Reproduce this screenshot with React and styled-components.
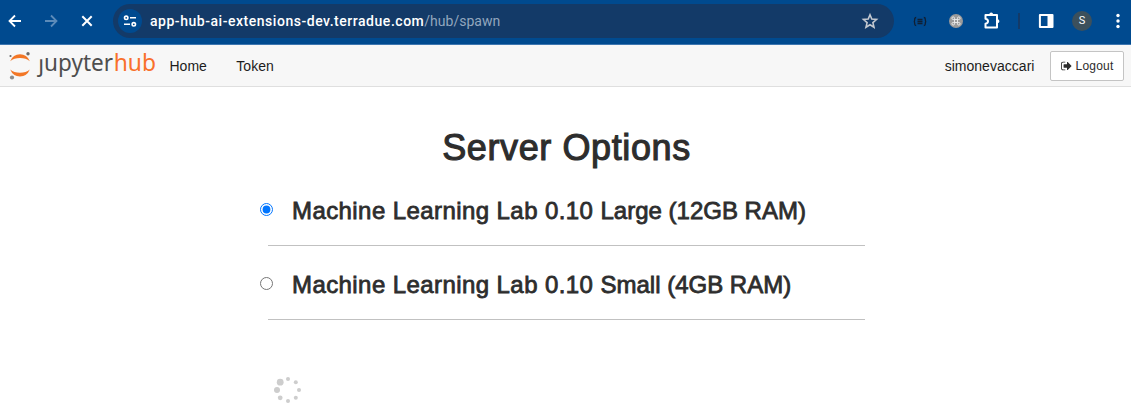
import React from "react";
import styled, { createGlobalStyle } from "styled-components";

const Global = createGlobalStyle`
  * { box-sizing: border-box; }
  body { margin: 0; background: #fff; color: #2d2d2d; font-family: "Liberation Sans", Arial, sans-serif; overflow: hidden; }
`;
const Toolbar = styled.div`
  height: 45px;
  padding: 0 3px 3px 5px;
  background: #004a8f;
  border-bottom: 1px solid #3d76b0;
  display: flex;
  align-items: center;
  & > * { flex-shrink: 0; }
`;
const ToolIcon = styled.svg`
  display: block;
  flex: none;
  width: 20px;
  height: 20px;
  margin-right: ${(p) => p.$gap || 0}px;
  fill: none;
  stroke: ${(p) => p.$color || "#fff"};
  stroke-width: 2;
`;
const AddressBar = styled.div`
  width: 781px;
  height: 34px;
  border-radius: 17px;
  background: #133a68;
  display: flex;
  align-items: center;
  padding: 0 14px 0 5px;
  margin-right: 16px;
`;
const SiteInfo = styled.div`
  width: 24px;
  height: 24px;
  border-radius: 50%;
  background: #004a8f;
  display: grid;
  place-items: center;
  margin-right: 8px;
`;
const Url = styled.div`
  flex: 1;
  font: 500 14px/20px Roboto, sans-serif;
  letter-spacing: 0.53px;
  color: #fff;
  white-space: nowrap;
`;
const Path = styled.span`
  color: #92a6be;
  font-weight: 400;
  letter-spacing: 0;
`;
const Divider = styled.div`
  width: 2px;
  height: 16px;
  background: #133a68;
  margin-right: 16px;
`;
const Avatar = styled.div`
  width: 20px;
  height: 20px;
  border-radius: 50%;
  background: #3c505c;
  color: #fff;
  font: 11px/20px Roboto, sans-serif;
  text-align: center;
  margin-right: 16px;
`;
const Navbar = styled.nav`
  height: 42px;
  background: #f7f7f7;
  border-bottom: 1px solid #dfdfdf;
  display: flex;
  align-items: center;
  padding: 0 7px 0 8px;
`;
const Logo = styled.svg`
  display: block;
  flex: none;
  width: 150px;
  height: 41px;
  margin-right: 11.5px;
`;
const NavLink = styled.a`
  font-size: 14px;
  line-height: 20px;
  letter-spacing: ${(p) => p.$spacing || 0}px;
  color: #1c1c1c;
  margin-right: ${(p) => p.$gap || 0}px;
`;
const Spacer = styled.div`
  flex: 1;
`;
const LogoutButton = styled.button`
  width: 74px;
  height: 30px;
  padding: 0;
  border: 1px solid #c4c4c4;
  border-radius: 2px;
  background: #fff;
  color: #2d2d2d;
  font: 12px/18px "Liberation Sans", Arial, sans-serif;
  letter-spacing: 0.2px;
  display: flex;
  align-items: center;
  justify-content: center;
  gap: 3px;
`;
const Main = styled.main`
  width: 597px;
  margin-left: 268px;
  padding-top: 41px;
`;
const Title = styled.h1`
  margin: 0;
  font-size: 36px;
  line-height: 40px;
  font-weight: 400;
  letter-spacing: 0.6px;
  -webkit-text-stroke: 1.1px #2d2d2d;
  text-align: center;
`;
const OptionList = styled.div`
  margin-top: 4px;
`;
const Option = styled.label`
  display: flex;
  align-items: center;
  height: 74px;
  padding-top: 2px;
  border-bottom: 1px solid #c1c1c1;
`;
const Radio = styled.input`
  width: 13px;
  height: 13px;
  margin: 0 19px 0 -8px;
`;
const OptionName = styled.span`
  padding-top: 2px;
  font-size: 24px;
  line-height: 26px;
  letter-spacing: 0.42px;
  -webkit-text-stroke: 0.8px #2d2d2d;
  white-space: nowrap;
`;
const OptionSize = styled.span`
  letter-spacing: 0;
`;
const Spinner = styled.svg`
  display: block;
  width: 30px;
  height: 30px;
  margin: 55px 0 0 5px;
  fill: #cdcdcd;
`;

const options = [
  { lab: "Machine Learning Lab 0.10", size: "Large (12GB RAM)" },
  { lab: "Machine Learning Lab 0.10", size: "Small (4GB RAM)" },
];

export default function App() {
  return (
    <>
      <Global />
      <Toolbar>
        <ToolIcon viewBox="0 0 20 20" $gap={16}><path d="M16 10H5M10 4.5 4.5 10 10 15.5" strokeWidth="1.8" /></ToolIcon>
        <ToolIcon viewBox="0 0 20 20" $gap={16} $color="#5c8bb9"><path d="M4 10h11M10 4.5l5.5 5.5-5.5 5.5" strokeWidth="1.8" /></ToolIcon>
        <ToolIcon viewBox="0 0 20 20" $gap={16}><path d="M5.3 5.3l9.4 9.4M14.7 5.3l-9.4 9.4" /></ToolIcon>
        <AddressBar>
          <SiteInfo>
            <ToolIcon viewBox="0 0 20 20"><g strokeWidth="1.6"><circle cx="6.2" cy="6.8" r="1.7" /><path d="M10 6.8h6M4 13.3h6" /><circle cx="13.8" cy="13.3" r="1.7" /></g></ToolIcon>
          </SiteInfo>
          <Url>app-hub-ai-extensions-dev.terradue.com<Path>/hub/spawn</Path></Url>
          <ToolIcon viewBox="0 0 20 20" $color="#c3c8d0"><path d="M10 3.8l1.8 4.3 4.7.4-3.6 3.1 1.1 4.6-4-2.5-4 2.5 1.1-4.6-3.6-3.1 4.7-.4z" strokeWidth="1.6" /></ToolIcon>
        </AddressBar>
        <ToolIcon viewBox="0 0 20 20" $gap={16} $color="#101f33"><path d="M6.2 6.5q-1.5 0-1.5 1.5v1q0 1.5-1 1.5 1 0 1 1.5v1q0 1.5 1.5 1.5M13.8 6.5q1.5 0 1.5 1.5v1q0 1.5 1 1.5-1 0-1 1.5v1q0 1.5-1.5 1.5M7.5 8.5h5M7.5 10.5h5M7.5 12.5h5" strokeWidth="1.3" /></ToolIcon>
        <ToolIcon viewBox="0 0 20 20" $gap={16}>
          <circle cx="10" cy="10" r="7" fill="#9a9a9a" stroke="none" />
          <path d="M8.5 8.5v3h3v-3zM8.5 8.5H7.2a1.3 1.3 0 1 1 1.3-1.3zM11.5 8.5V7.2a1.3 1.3 0 1 1 1.3 1.3zM11.5 11.5h1.3a1.3 1.3 0 1 1-1.3 1.3zM8.5 11.5v1.3a1.3 1.3 0 1 1-1.3-1.3z" strokeWidth=".9" stroke="#eee" />
        </ToolIcon>
        <ToolIcon viewBox="0 0 20 20" $gap={16}>
          <path d="M3.5 3.9H15V16.5H3.5V12.7Q6 12.3 6 10.2T3.5 7.7Z" strokeLinejoin="round" />
          <path d="M7.3 3.5a1.9 1.9 0 0 1 3.8 0zM15.5 8.3a1.9 1.9 0 0 1 0 3.8z" fill="#fff" stroke="none" />
        </ToolIcon>
        <Divider />
        <ToolIcon viewBox="0 0 20 20" $gap={16}><path d="M3.9 3.9h12.6v12.2H3.9z" strokeLinejoin="round" /><path d="M11.5 4h5v12h-5z" fill="#fff" stroke="none" /></ToolIcon>
        <Avatar>S</Avatar>
        <ToolIcon viewBox="0 0 20 20"><g fill="#fff" stroke="none"><circle cx="10" cy="4.5" r="1.7" /><circle cx="10" cy="10" r="1.7" /><circle cx="10" cy="15.5" r="1.7" /></g></ToolIcon>
      </Toolbar>
      <Navbar>
        <Logo viewBox="8 45 150 41">
          <clipPath id="wordmark"><path d="M45 45H160V86H34V59.3H45Z" /></clipPath>
          <path d="M10.2 61.2Q13 54.3 20 54.3T29.8 61.2Q26 58 20 58T10.2 61.2ZM10.2 69.5Q14 72.7 20 72.7T29.8 69.5Q27 76.4 20 76.4T10.2 69.5Z" fill="#f37726" />
          <circle cx="28" cy="53.8" r="1.7" fill="#6b6b6b" />
          <circle cx="10.5" cy="56" r="1.1" fill="#6b6b6b" />
          <circle cx="12" cy="77.5" r="2.1" fill="#8c8c8c" />
          <g fontFamily="'Noto Sans', sans-serif" fontSize="23">
            <text x="38.3" y="71.3" textLength="74.7" lengthAdjust="spacingAndGlyphs" fill="#4e4e4e" clipPath="url(#wordmark)">jupyter</text>
            <text x="113.7" y="71.3" textLength="42.3" lengthAdjust="spacingAndGlyphs" fill="#f9702b">hub</text>
          </g>
        </Logo>
        <NavLink $gap={29.5}>Home</NavLink>
        <NavLink>Token</NavLink>
        <Spacer />
        <NavLink $gap={15.5} $spacing={0.03}>simonevaccari</NavLink>
        <LogoutButton>
          <svg width="12" height="12" viewBox="0 0 1792 1792" fill="#2d2d2d"><path d="M640 1440q0 4 1 20t.5 26.5-3 23.5-10 19.5-20.5 6.5h-320q-119 0-203.5-84.5t-84.5-203.5v-704q0-119 84.5-203.5t203.5-84.5h320q13 0 22.5 9.5t9.5 22.5q0 4 1 20t.5 26.5-3 23.5-10 19.5-20.5 6.5h-320q-66 0-113 47t-47 113v704q0 66 47 113t113 47h312l11.5 1 11.5 3 8 5.5 7 9 2 13.5zm928-544q0 26-19 45l-544 544q-19 19-45 19t-45-19-19-45v-288h-448q-26 0-45-19t-19-45v-384q0-26 19-45t45-19h448v-288q0-26 19-45t45-19 45 19l544 544q19 19 19 45z" /></svg>
          Logout
        </LogoutButton>
      </Navbar>
      <Main>
        <Title>Server Options</Title>
        <OptionList>
          {options.map(({ lab, size }, i) => (
            <Option key={size}>
              <Radio type="radio" name="profile" defaultChecked={i === 0} />
              <OptionName>{lab} <OptionSize>{size}</OptionSize></OptionName>
            </Option>
          ))}
        </OptionList>
        <Spinner viewBox="0 0 30 30">
          <circle cx="15" cy="4" r="2" />
          <circle cx="22.8" cy="7.2" r="2" />
          <circle cx="26" cy="15" r="2" />
          <circle cx="22.8" cy="22.8" r="2" />
          <circle cx="15" cy="26" r="2" />
          <circle cx="7.2" cy="22.8" r="2.4" />
          <circle cx="4" cy="15" r="3" />
          <circle cx="7.2" cy="7.2" r="3.4" />
        </Spinner>
      </Main>
    </>
  );
}
